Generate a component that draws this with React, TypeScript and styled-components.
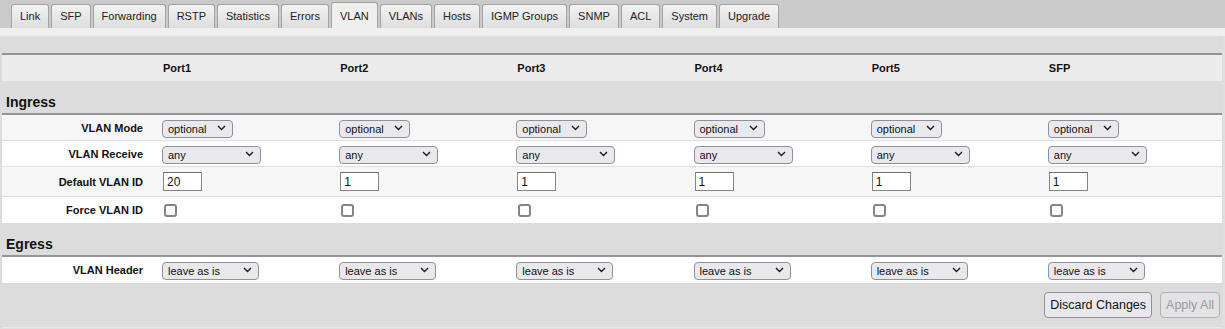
import React from 'react'
import styled, {createGlobalStyle} from 'styled-components'

const tabs = [
  'Link',
  'SFP',
  'Forwarding',
  'RSTP',
  'Statistics',
  'Errors',
  'VLAN',
  'VLANs',
  'Hosts',
  'IGMP Groups',
  'SNMP',
  'ACL',
  'System',
  'Upgrade',
]

const ports = ['Port1', 'Port2', 'Port3', 'Port4', 'Port5', 'SFP']
const defaultIds = ['20', '1', '1', '1', '1', '1']

const modeOptions = ['disabled', 'optional', 'enabled', 'strict']
const receiveOptions = ['any', 'only tagged', 'only untagged']
const headerOptions = ['leave as is', 'always strip', 'add if missing']

const GlobalStyle = createGlobalStyle`
  html, body {
    margin: 0;
    padding: 0;
    background: #e0e0e0;
    font-family: "Liberation Sans", Arial, sans-serif;
    color: #111;
  }
`

const Chevron = () => (
  <svg width="9" height="6" viewBox="0 0 9 6">
    <polyline
      points="1,1 4.5,4.5 8,1"
      fill="none"
      stroke="#1c1c1c"
      strokeWidth="1.4"
    />
  </svg>
)

type PickProps = {value: string; options: string[]; width: number}

const Pick = ({value, options, width}: PickProps) => (
  <SelectWrap $width={width}>
    <Select defaultValue={value}>
      {options.map((o) => (
        <option key={o}>{o}</option>
      ))}
    </Select>
    <ChevronSpot>
      <Chevron />
    </ChevronSpot>
  </SelectWrap>
)

const App = () => {
  return (
    <>
      <GlobalStyle />
      <TabBar>
        {tabs.map((t) => (
          <Tab key={t} $active={t === 'VLAN'}>
            {t}
          </Tab>
        ))}
      </TabBar>
      <Strip />
      <Main>
        <HeaderRow>
          <span />
          {ports.map((p) => (
            <HeadCell key={p}>{p}</HeadCell>
          ))}
        </HeaderRow>

        <SectionTitle>Ingress</SectionTitle>
        <SectionBody>
          <Row $shade>
            <Label>VLAN Mode</Label>
            {ports.map((p) => (
              <Cell key={p}>
                <Pick value="optional" options={modeOptions} width={71} />
              </Cell>
            ))}
          </Row>
          <Row>
            <Label>VLAN Receive</Label>
            {ports.map((p) => (
              <Cell key={p}>
                <Pick value="any" options={receiveOptions} width={99} />
              </Cell>
            ))}
          </Row>
          <Row $shade $tall>
            <Label>Default VLAN ID</Label>
            {ports.map((p, i) => (
              <Cell key={p}>
                <IdInput type="text" defaultValue={defaultIds[i]} />
              </Cell>
            ))}
          </Row>
          <Row $last>
            <Label>Force VLAN ID</Label>
            {ports.map((p) => (
              <Cell key={p}>
                <Check type="checkbox" />
              </Cell>
            ))}
          </Row>
        </SectionBody>

        <SectionTitle>Egress</SectionTitle>
        <SectionBody>
          <Row $last>
            <Label>VLAN Header</Label>
            {ports.map((p) => (
              <Cell key={p}>
                <Pick value="leave as is" options={headerOptions} width={97} />
              </Cell>
            ))}
          </Row>
        </SectionBody>

        <Footer>
          <Button>Discard Changes</Button>
          <Button disabled>Apply All</Button>
        </Footer>
      </Main>
    </>
  )
}

export default App

const TabBar = styled.div`
  display: flex;
  align-items: flex-end;
  gap: 2px;
  height: 28px;
  padding-left: 11px;
  background: #cacaca;
`

const Tab = styled.div<{$active?: boolean}>`
  box-sizing: border-box;
  height: ${(p) => (p.$active ? '26px' : '24px')};
  padding: ${(p) => (p.$active ? '2px 8px 0' : '0 8px')};
  line-height: 22px;
  font-size: 11px;
  color: #222;
  border: 1px solid #a3a3a3;
  border-bottom: none;
  border-radius: 3px 3px 0 0;
  background: ${(p) =>
    p.$active ? '#efefef' : 'linear-gradient(#f3f3f3, #dddddd)'};
`

const Strip = styled.div`
  height: 8px;
  background: #efefef;
`

const Main = styled.div`
  width: 1223px;
  box-sizing: border-box;
  padding: 17px 1px 0 2px;
  background: #dcdcdc;
`

const grid = `
  display: grid;
  grid-template-columns: 157px repeat(6, 1fr);
  align-items: center;
`

const HeaderRow = styled.div`
  ${grid}
  height: 26px;
  border-top: 2px solid #959595;
  background: #ececec;
`

const HeadCell = styled.div`
  padding-left: 4px;
  font-size: 11px;
  font-weight: bold;
`

const SectionTitle = styled.div`
  box-sizing: border-box;
  height: 32px;
  display: flex;
  align-items: flex-end;
  padding: 0 0 3px 4px;
  font-size: 14px;
  font-weight: bold;
`

const SectionBody = styled.div`
  border-top: 2px solid #959595;
`

const Row = styled.div<{$shade?: boolean; $tall?: boolean; $last?: boolean}>`
  ${grid}
  box-sizing: border-box;
  height: ${(p) => (p.$tall ? '30px' : '26px')};
  background: ${(p) => (p.$shade ? '#f6f6f6' : '#ffffff')};
  border-bottom: ${(p) => (p.$last ? 'none' : '1px solid #e0e0e0')};
`

const Label = styled.div`
  padding-right: 16px;
  text-align: right;
  font-size: 11px;
  font-weight: bold;
`

const Cell = styled.div`
  display: flex;
  align-items: center;
  padding-left: 3px;
`

const SelectWrap = styled.div<{$width: number}>`
  position: relative;
  width: ${(p) => p.$width}px;
  height: 18px;
`

const Select = styled.select`
  appearance: none;
  box-sizing: border-box;
  width: 100%;
  height: 100%;
  margin: 0;
  padding: 0 16px 0 5px;
  font-family: inherit;
  font-size: 11px;
  color: #111;
  background: #e9e9ed;
  border: 1px solid #8f8f9d;
  border-radius: 4px;
  outline: none;
`

const ChevronSpot = styled.span`
  position: absolute;
  right: 7px;
  top: 6px;
  display: flex;
  pointer-events: none;
`

const IdInput = styled.input`
  box-sizing: border-box;
  width: 39px;
  height: 19px;
  margin: 0 0 0 1px;
  padding: 0 3px;
  font-family: inherit;
  font-size: 12px;
  color: #111;
  background: #fff;
  border: 1px solid #858585;
  border-top-color: #6f6f6f;
  outline: none;
`

const Check = styled.input`
  appearance: none;
  box-sizing: border-box;
  width: 13px;
  height: 13px;
  margin: 0 0 0 2px;
  background: #fff;
  border: 2px solid #84848f;
  border-radius: 3px;
`

const Footer = styled.div`
  display: flex;
  justify-content: flex-end;
  gap: 8px;
  padding: 9px 2px 9px 0;
  border-bottom: 1px solid #e8e8e8;
`

const Button = styled.button`
  box-sizing: border-box;
  height: 26px;
  padding: 0 5px;
  font-family: inherit;
  font-size: 12.5px;
  color: #111;
  background: #e9e9ed;
  border: 1px solid #8f8f9d;
  border-radius: 4px;

  &:disabled {
    color: #9a9a9a;
    background: #e3e3e6;
    border-color: #b0b0b6;
  }
`
